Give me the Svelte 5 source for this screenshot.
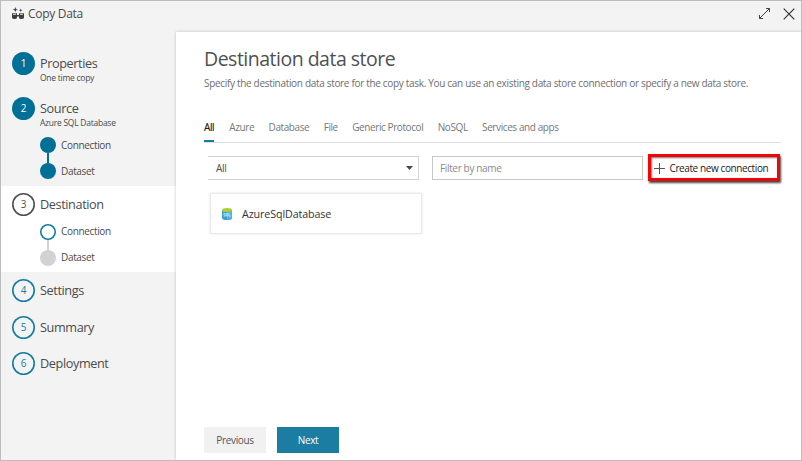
<script>
  const steps = [
    { n: 1, title: 'Properties', note: 'One time copy', state: 'done', height: 44.5 },
    { n: 2, title: 'Source', note: 'Azure SQL Database', state: 'done', height: 96.5, subs: ['full', 'full'] },
    { n: 3, title: 'Destination', state: 'current', height: 86, subs: ['open', 'idle'] },
    { n: 4, title: 'Settings', state: 'todo', height: 36.5 },
    { n: 5, title: 'Summary', state: 'todo', height: 36.5 },
    { n: 6, title: 'Deployment', state: 'todo', height: 36 }
  ];
  const tabs = ['All', 'Azure', 'Database', 'File', 'Generic Protocol', 'NoSQL', 'Services and apps'];
</script>

<div class="window">
  <header>
    <svg class="logo" width="12" height="13" viewBox="0 0 12 13">
      <g fill="#3d3d3d">
        <path d="M0 6.300h5v4.200q0 1.500-2.500 1.500T0 10.500zM7 6.300h5v4.200q0 1.500-2.500 1.500T7 10.500z" />
        <path d="M5 8h2v1.500H5zM3.300 0l.7 1.900 1.900.7-1.900.7-.7 1.900-.7-1.900-1.900-.7 1.900-.7zM8.700 1.500l.5 1.300 1.300.5-1.300.5-.5 1.300-.5-1.300-1.300-.5 1.300-.5z" />
      </g>
      <path d="M1 7.300h3M8 7.300h3" stroke="#f3f3f3" stroke-width=".9" />
    </svg>
    <span class="app">Copy Data</span>
    <svg class="expand" width="13" height="13" viewBox="0 0 13 13" fill="none" stroke="#444" stroke-width="1">
      <path d="M1.500 11.500 11.500 1.500M8 1.500h3.500v3.500M1.500 8v3.500h3.500" />
    </svg>
    <svg class="close" width="12" height="12" viewBox="0 0 12 12" fill="none" stroke="#333" stroke-width="1.200">
      <path d="M.7.7l10.600 10.600M11.300.7.7 11.300" />
    </svg>
  </header>

  <div class="body">
    <nav>
      {#each steps as s}
        <section class={s.state} style="height:{s.height}px">
          <div class="step">
            <span class="num">{s.n}</span>
            <div class="label">
              <div class="title">{s.title}</div>
              {#if s.note}<div class="note">{s.note}</div>{/if}
            </div>
          </div>
          {#if s.subs}
            <div class="subs">
              <div class="sub"><i class="dot {s.subs[0]}"></i><span>Connection</span></div>
              <div class="link"></div>
              <div class="sub"><i class="dot {s.subs[1]}"></i><span>Dataset</span></div>
            </div>
          {/if}
        </section>
      {/each}
    </nav>

    <main>
      <h1>Destination data store</h1>
      <p>Specify the destination data store for the copy task. You can use an existing data store connection or specify a new data store.</p>
      <div class="tabs">
        {#each tabs as t, i}
          <span class="tab" class:active={i === 0}>{t}</span>
        {/each}
      </div>
      <div class="filters">
        <div class="select"><span>All</span><svg width="7" height="4" viewBox="0 0 7 4"><path d="M0 0h7L3.500 4z" fill="#444b50" /></svg></div>
        <div class="input">Filter by name</div>
        <div class="create">
          <svg width="11" height="11" viewBox="0 0 11 11"><path d="M5.500 0v11M0 5.500h11" stroke="#555" /></svg>
          <span>Create new connection</span>
        </div>
      </div>
      <div class="card">
        <svg width="10" height="12" viewBox="0 0 10 12">
          <path d="M0 2v8q0 2 5 2t5-2V2z" fill="#3a9fd0" />
          <path d="M5 2h5v8q0 2-5 2z" fill="#55b3df" />
          <ellipse cx="5" cy="2" rx="5" ry="2" fill="#a9cf38" />
          <path d="M3.500 5.500H1.800v1.300h1.500v1.300H1.600M4.300 5.500h1.600v2.600H4.300zM7.100 5.300v2.800h1.500" fill="none" stroke="#d9f0fa" stroke-width=".7" />
        </svg>
        <span>AzureSqlDatabase</span>
      </div>
      <footer>
        <button class="prev">Previous</button>
        <button class="next">Next</button>
      </footer>
    </main>
  </div>
</div>

<style>
  .window {
    box-sizing: border-box;
    width: 802px;
    height: 461px;
    border: 1px solid #bdbdbd;
    background: #f3f3f3;
    font-family: 'Open Sans', 'Noto Sans', sans-serif;
    color: #4b4b4b;
    display: flex;
    flex-direction: column;
    overflow: hidden;
    white-space: nowrap;
  }
  header { height: 31px; flex: none; display: flex; align-items: flex-start; padding: 0 6px 0 11px; box-sizing: border-box; }
  .logo { margin-top: 6px; }
  .app { margin: 4px auto 0 4px; font-size: 12px; line-height: 18px; letter-spacing: -0.3px; }
  .expand { margin: 6px 12px 0 0; }
  .close { margin-top: 7px; }
  .body { flex: 1; display: flex; min-height: 0; }
  nav { width: 175px; flex: none; padding-top: 13px; box-sizing: border-box; }
  section { box-sizing: border-box; padding: 7px 0 0 11px; }
  section.current { background: #fff; }
  .step { display: flex; height: 23px; }
  .num {
    width: 23px; height: 23px; flex: none; border-radius: 50%;
    box-shadow: inset 0 0 0 1.6px #137da2; color: #137da2; font-size: 10px; line-height: 23px; text-align: center;
  }
  .done .num { background: #007096; box-shadow: none; color: #fff; }
  .current .num { box-shadow: inset 0 0 0 1.6px #505050; color: #505050; }
  .label { margin-left: 5px; }
  .title { font-size: 12.7px; line-height: 22px; letter-spacing: -0.4px; }
  .note { font-size: 8.5px; line-height: 12px; margin-top: -2px; letter-spacing: -0.26px; }
  .subs { margin: 17.500px 0 0 28px; font-size: 10px; letter-spacing: -0.34px; }
  .current .subs { margin-top: 7.500px; }
  .sub { display: flex; align-items: center; height: 16px; gap: 5px; line-height: 15px; }
  .dot { box-sizing: border-box; width: 16px; height: 16px; border-radius: 50%; background: #007096; }
  .dot.open { background: #fff; box-shadow: inset 0 0 0 1.6px #137da2; }
  .dot.idle { background: #d1d3d3; }
  .link { width: 1.5px; height: 10px; margin-left: 7px; background: #007096; }
  .current .link { background: #d1d3d3; }
  main {
    flex: 1; min-width: 0; box-sizing: border-box; padding: 12px 20px 0 28px; background: #fff;
    box-shadow: 0 0 3px rgba(0, 0, 0, 0.22); display: flex; flex-direction: column;
  }
  h1 { margin: 0; font-size: 19.500px; font-weight: 400; line-height: 30px; letter-spacing: -0.5px; color: #505050; }
  p { margin: 2px 0 0; font-size: 10px; line-height: 15px; letter-spacing: -0.318px; color: #6e6e6e; }
  .tabs { display: flex; gap: 14.400px; height: 23px; margin-top: 28px; border-bottom: 1px solid #dedede; font-size: 10px; line-height: 16px; letter-spacing: -0.41px; color: #777; }
  .tab { height: 22px; }
  .active { color: #222; border-bottom: 2px solid #137da2; box-sizing: border-box; height: 23px; -webkit-text-stroke: 0.2px #222; margin-right: 0.8px; }
  .filters { display: flex; margin-top: 13px; font-size: 10px; line-height: 23px; letter-spacing: -0.35px; }
  .select { box-sizing: border-box; margin-left: 4px; width: 211px; height: 24px; border: 1px solid #d2d2d2; border-left: 0; padding: 0 5px 0 8px; display: flex; justify-content: space-between; align-items: center; }
  .input { box-sizing: border-box; margin-left: 13px; width: 211px; height: 24px; border: 1px solid #c8c8c8; padding-left: 7px; color: #8a8a8a; }
  .create { box-sizing: border-box; width: 132px; height: 27px; margin: -2px -4px 0 5px; border: 3px solid #f20505; box-shadow: 1px 2px 2px #444, inset 1px 1px 2px #777; padding: 1px 0 0 3px; display: flex; align-items: center; gap: 4.500px; letter-spacing: -0.4px; color: #222; }
  .card { box-sizing: border-box; width: 212px; height: 41px; margin: 12px 0 0 6px; border: 1px solid #ebebeb; box-shadow: 0 0 2px #ddd; display: flex; align-items: center; padding-left: 11px; gap: 10px; font-size: 10.700px; letter-spacing: -0.1px; color: #333; }
  footer { display: flex; gap: 11px; margin-top: auto; padding-bottom: 7px; }
  button { width: 62px; height: 26px; border: 0; padding: 0; font: 10px 'Open Sans', 'Noto Sans', sans-serif; letter-spacing: -0.35px; background: #f1f1f1; color: #555; }
  .next { background: #1a7da1; color: #fff; }
</style>
